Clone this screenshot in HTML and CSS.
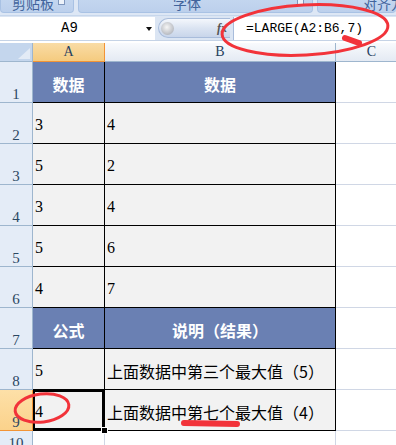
FILE: index.html
```html
<!DOCTYPE html>
<html lang="zh-CN">
<head>
    <meta charset="UTF-8">
    <title>LARGE</title>
    <link rel="stylesheet" href="styles.css">
</head>
<body>
    <div class="ribbon">
        <div class="group g-clip"><span class="glabel">剪贴板</span><i class="launcher"></i></div>
        <div class="group g-font"><span class="glabel">字体</span><i class="launcher"></i></div>
        <div class="group g-align"><span class="glabel">对齐方</span></div>
    </div>

    <div class="fbar">
        <div class="namebox"><span>A9</span><i class="arrow"></i></div>
        <div class="fxbtn"><i class="knob"></i><span class="fx">fx</span></div>
        <div class="formula">=LARGE(A2:B6,7)</div>
    </div>

    <div class="sheet">
        <div class="corner"></div>
        <div class="colhd colhd-on">A</div>
        <div class="colhd">B</div>
        <div class="colhd">C</div>

        <div class="rowhd">1</div>
        <div class="c hd">数据</div>
        <div class="c hd">数据</div>
        <div class="c cc"></div>

        <div class="rowhd">2</div>
        <div class="c num">3</div>
        <div class="c num">4</div>
        <div class="c cc"></div>

        <div class="rowhd">3</div>
        <div class="c num">5</div>
        <div class="c num">2</div>
        <div class="c cc"></div>

        <div class="rowhd">4</div>
        <div class="c num">3</div>
        <div class="c num">4</div>
        <div class="c cc"></div>

        <div class="rowhd">5</div>
        <div class="c num">5</div>
        <div class="c num">6</div>
        <div class="c cc"></div>

        <div class="rowhd">6</div>
        <div class="c num">4</div>
        <div class="c num">7</div>
        <div class="c cc"></div>

        <div class="rowhd">7</div>
        <div class="c hd">公式</div>
        <div class="c hd">说明（结果）</div>
        <div class="c cc"></div>

        <div class="rowhd">8</div>
        <div class="c num">5</div>
        <div class="c">上面数据中第三个最大值（5）</div>
        <div class="c cc"></div>

        <div class="rowhd rowhd-on">9</div>
        <div class="c num sel">4</div>
        <div class="c">上面数据中第七个最大值（4）</div>
        <div class="c cc"></div>

        <div class="rowhd rowhd-last">10</div>
        <div class="c blank"></div>
        <div class="c blank"></div>
        <div class="c cc"></div>
    </div>

    <!-- red pen marks drawn over the screenshot -->
    <svg class="marks" width="396" height="445" viewBox="0 0 396 445">
        <ellipse cx="305" cy="30" rx="83" ry="25" transform="rotate(-3 305 30)" />
        <path class="thick" d="M345 38 L359 43" />
        <ellipse cx="42" cy="408" rx="27" ry="14" transform="rotate(-7 42 408)" />
        <path class="thick" d="M184 423 L237 424" />
    </svg>
</body>
</html>
```

FILE: styles.css
```css
body {
    margin: 0;
    width: 396px;
    height: 445px;
    overflow: hidden;
    position: relative;
    background: #fff;
    font-family: "Noto Sans CJK SC", sans-serif;
}

/* ribbon group labels, cut off at the top */
.ribbon {
    height: 16px;
    display: flex;
    gap: 4px;
    background: #dde7f5;
    box-sizing: border-box;
    border-bottom: 1px solid #c7d7ec;
}
.group {
    height: 13px;
    position: relative;
    display: flex;
    align-items: flex-end;
    box-sizing: border-box;
    overflow: hidden;
    background: linear-gradient(#c3d6ef, #bcd0ec);
    border: 1px solid #a9c2e4;
    border-top: none;
    border-radius: 0 0 4px 4px;
}
.g-clip {
    width: 74px;
    padding-left: 11px;
}
.g-font {
    width: 235px;
    padding-left: 94px;
}
.g-align {
    flex: 1;
    padding-left: 45px;
    border-right: none;
}
.glabel {
    font-size: 14px;
    line-height: 14px;
    margin-bottom: 2px;
    color: #41649c;
    white-space: nowrap;
}
.launcher {
    position: absolute;
    right: 8px;
    top: 0;
    width: 5px;
    height: 4px;
    border: 1px solid #7f97bd;
    border-top: none;
    background: #eef3fa;
}

/* formula bar */
.fbar {
    height: 25px;
    display: flex;
    align-items: center;
    background: #dbe5f3;
    box-sizing: border-box;
    padding: 1px 0;
    border-bottom: 1px solid #c5d3e6;
}
.namebox {
    width: 155px;
    height: 23px;
    background: #fff;
    display: flex;
    align-items: center;
    justify-content: center;
    padding-right: 16px;
    box-sizing: border-box;
    position: relative;
    font-family: "Liberation Mono", monospace;
    font-size: 14px;
}
.arrow {
    position: absolute;
    right: 3px;
    top: 10px;
    border-left: 3.5px solid transparent;
    border-right: 3.5px solid transparent;
    border-top: 4px solid #111;
}
.fxbtn {
    margin-left: 3px;
    width: 72px;
    height: 20px;
    box-sizing: border-box;
    display: flex;
    align-items: center;
    justify-content: space-between;
    padding: 0 2px 0 2px;
    background: linear-gradient(#f4f7fc, #dbe4f2 50%, #c8d5ea);
    border: 1px solid #a8bcdb;
    border-right: none;
    border-radius: 10px 0 0 10px;
}
.knob {
    width: 13px;
    height: 13px;
    border-radius: 50%;
    background: radial-gradient(circle at 45% 40%, #f6f6f6, #b9bcc2 70%, #9da2aa);
}
.fx {
    font-family: "Liberation Serif", serif;
    font-style: italic;
    font-weight: bold;
    font-size: 12px;
    color: #555;
    margin-right: 1px;
}
.formula {
    flex: 1;
    height: 23px;
    margin-left: 3px;
    padding-left: 12px;
    background: #fff;
    border-left: 1px solid #a8bcdb;
    font-family: "Liberation Mono", monospace;
    font-size: 13px;
    line-height: 23px;
    color: #000;
}

/* worksheet */
.sheet {
    margin-top: 2px;
    display: grid;
    grid-template-columns: 33px 72px 231px 72px;
    grid-template-rows: 19px repeat(9, 41px) 20px;
}
.sheet > div {
    box-sizing: border-box;
}
.corner {
    background: #c4d6ed;
    border-right: 1px solid #9eb6ce;
    border-bottom: 1px solid #9eb6ce;
    position: relative;
}
.corner::after {
    content: "";
    position: absolute;
    right: 2px;
    bottom: 2px;
    border-left: 12px solid transparent;
    border-bottom: 11px solid #e3ebf6;
}
.colhd {
    display: flex;
    align-items: center;
    justify-content: center;
    background: linear-gradient(#f8fafd, #e4eaf3);
    border-right: 1px solid #9eb6ce;
    border-bottom: 1px solid #9eb6ce;
    font-family: "Liberation Serif", serif;
    font-size: 14px;
    color: #27415f;
}
.colhd-on {
    background: linear-gradient(#f9dca6, #f5cb7f);
    border-right-color: #f29436;
    border-bottom-color: #f29436;
}
.rowhd {
    display: flex;
    align-items: flex-end;
    justify-content: center;
    background: #e4ecf7;
    border-right: 1px solid #9eb6ce;
    border-bottom: 1px solid #9eb6ce;
    font-family: "Liberation Serif", serif;
    font-size: 15px;
    line-height: 15px;
    color: #2b4762;
}
.rowhd-on {
    background: linear-gradient(#fde0a8, #fbd28b);
    border-color: #f29436;
}
.rowhd-last {
    align-items: flex-start;
    padding-top: 5px;
}
.c {
    display: flex;
    align-items: center;
    padding: 4px 0 0 2px;
    background: #f2f2f2;
    border-right: 1px solid #000;
    border-bottom: 1px solid #000;
    font-size: 16px;
    color: #000;
    white-space: nowrap;
}
.num {
    font-family: "Liberation Serif", serif;
    font-size: 16px;
}
.hd {
    justify-content: center;
    padding-left: 0;
    background: #6a80b3;
    color: #fff;
    font-weight: bold;
}
.cc {
    background: #fff;
    border-right: none;
    border-bottom: 1px solid #d0d7e5;
}
.blank {
    background: #fff;
    border-right: 1px solid #d0d7e5;
    border-bottom: none;
}
.sel {
    position: relative;
    box-shadow: inset 0 0 0 2px #000;
}
.sel::after {
    content: "";
    position: absolute;
    right: -4px;
    bottom: -4px;
    width: 5px;
    height: 5px;
    background: #000;
    border: 1px solid #fff;
}

.marks {
    position: absolute;
    left: 0;
    top: 0;
    pointer-events: none;
}
.marks ellipse {
    fill: none;
    stroke: #f2333a;
    stroke-width: 3;
}
.marks .thick {
    fill: none;
    stroke: #f2333a;
    stroke-width: 6;
    stroke-linecap: round;
}
```
